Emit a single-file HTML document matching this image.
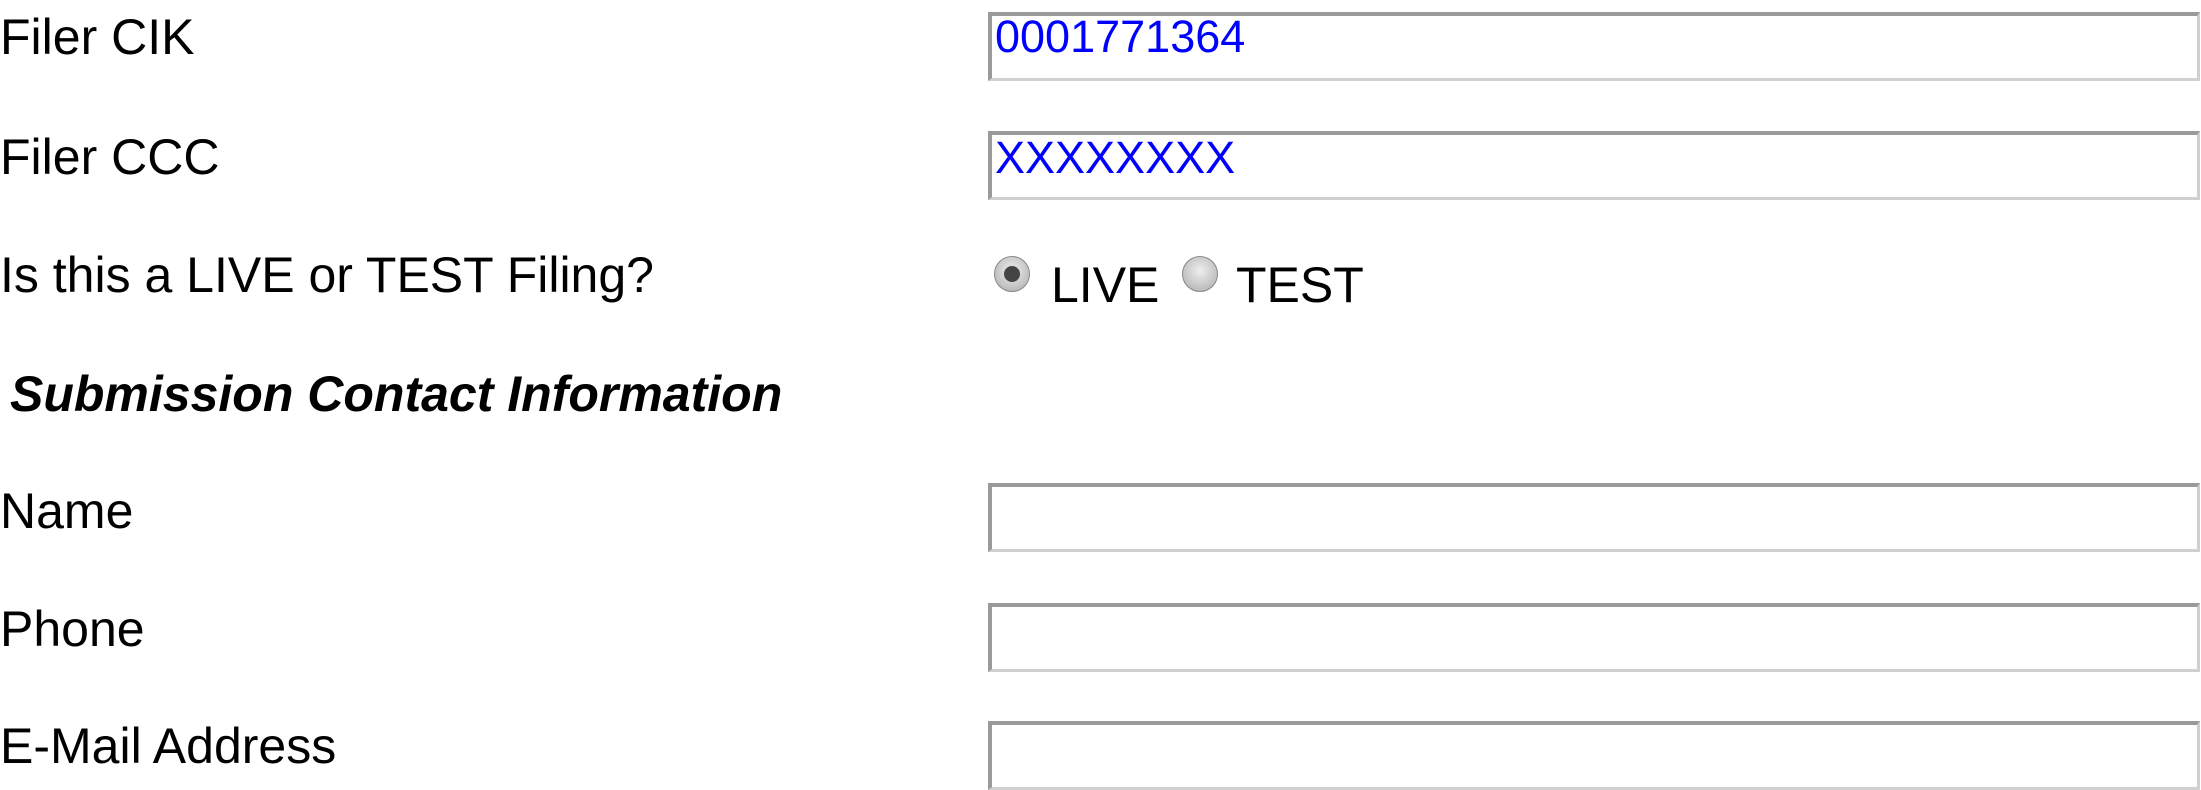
<!DOCTYPE html>
<html><head><meta charset="utf-8"><style>
body{margin:0;width:2201px;height:790px;background:#fff;position:relative;overflow:hidden;font-family:"Liberation Sans",Arial,sans-serif;color:#000}
.t{position:absolute;font-size:50px;line-height:50px;white-space:nowrap}
.in{position:absolute;left:988px;width:1205px;height:62px;border-style:solid;border-width:4px 3px 3px 4px;border-color:#9a9a9a #d0d0d0 #d0d0d0 #9a9a9a;background:#fff}
.v{position:absolute;font-size:45px;line-height:45px;color:#0000ff;left:995px}
.r{position:absolute;width:34px;height:34px;border-radius:50%;border:1px solid #888;background:radial-gradient(circle at 50% 40%,#eee,#aaa)}
</style></head><body>
<div class="t" style="left:0;top:12px">Filer CIK</div>
<div class="in" style="top:12px"></div>
<div class="v" style="top:14px">0001771364</div>
<div class="t" style="left:0;top:132px">Filer CCC</div>
<div class="in" style="top:131px"></div>
<div class="v" style="top:135px">XXXXXXXX</div>
<div class="t" style="left:0;top:250px">Is this a LIVE or TEST Filing?</div>
<div class="r" style="left:994px;top:256px"><div style="position:absolute;left:9px;top:9px;width:16px;height:16px;border-radius:50%;background:#444"></div></div>
<div class="t" style="left:1051px;top:260px">LIVE</div>
<div class="r" style="left:1182px;top:256px"></div>
<div class="t" style="left:1236px;top:260px">TEST</div>
<div class="t" style="left:10px;top:369px;font-weight:bold;font-style:italic">Submission Contact Information</div>
<div class="t" style="left:0;top:486px">Name</div>
<div class="in" style="top:483px"></div>
<div class="t" style="left:0;top:604px">Phone</div>
<div class="in" style="top:603px"></div>
<div class="t" style="left:0;top:721px">E-Mail Address</div>
<div class="in" style="top:721px"></div>
</body></html>
